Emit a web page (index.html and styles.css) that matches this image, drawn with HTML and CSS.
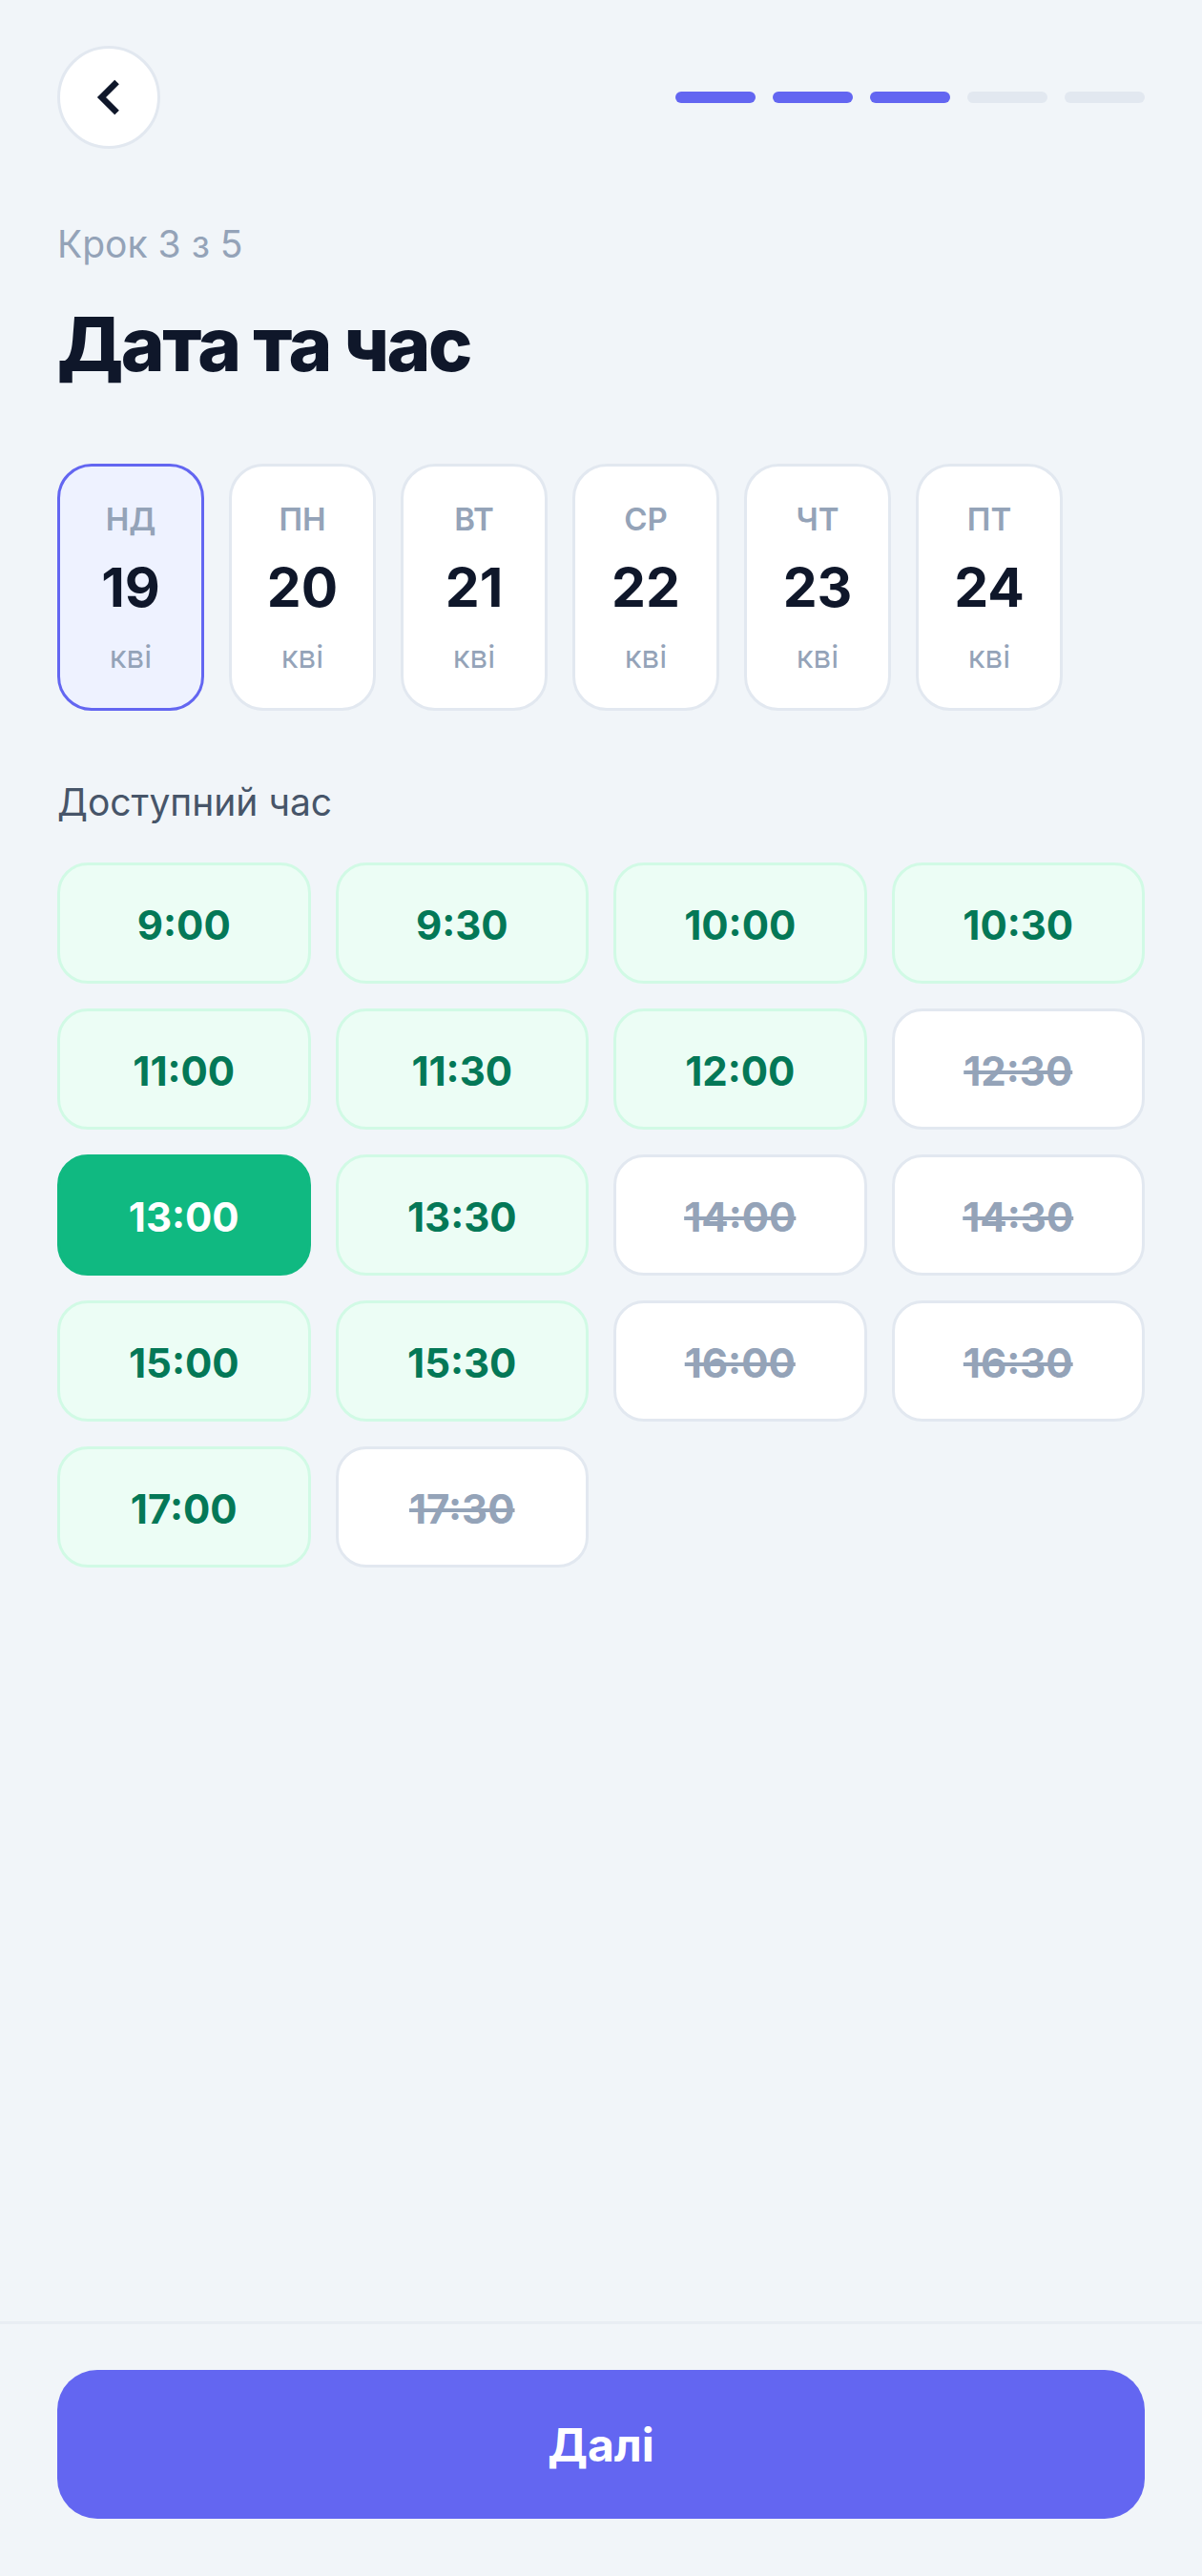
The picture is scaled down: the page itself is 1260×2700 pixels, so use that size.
FILE: index.html
```html
<!DOCTYPE html>
<html lang="uk">
<head>
    <meta charset="utf-8">
    <title>Дата та час</title>
    <link rel="stylesheet" href="styles.css">
</head>
<body>
    <div class="app">
        <main class="content">
            <header class="topbar">
                <button class="back-btn" aria-label="Назад">
                    <svg width="60" height="60" viewBox="0 0 24 24" fill="none" stroke="currentColor" stroke-width="2.6" stroke-linecap="square" stroke-linejoin="miter">
                        <path d="m14.5 17.5-5.5-5.5 5.5-5.5"/>
                    </svg>
                </button>
                <div class="progress">
                    <span class="bar done"></span>
                    <span class="bar done"></span>
                    <span class="bar done"></span>
                    <span class="bar"></span>
                    <span class="bar"></span>
                </div>
            </header>

            <p class="step">Крок 3 з 5</p>
            <h1 class="title">Дата та час</h1>

            <div class="days">
                <div class="day selected">
                    <span class="day-name">НД</span>
                    <span class="day-num">19</span>
                    <span class="day-month">кві</span>
                </div>
                <div class="day">
                    <span class="day-name">ПН</span>
                    <span class="day-num">20</span>
                    <span class="day-month">кві</span>
                </div>
                <div class="day">
                    <span class="day-name">ВТ</span>
                    <span class="day-num">21</span>
                    <span class="day-month">кві</span>
                </div>
                <div class="day">
                    <span class="day-name">СР</span>
                    <span class="day-num">22</span>
                    <span class="day-month">кві</span>
                </div>
                <div class="day">
                    <span class="day-name">ЧТ</span>
                    <span class="day-num">23</span>
                    <span class="day-month">кві</span>
                </div>
                <div class="day">
                    <span class="day-name">ПТ</span>
                    <span class="day-num">24</span>
                    <span class="day-month">кві</span>
                </div>
            </div>

            <h2 class="section-label">Доступний час</h2>

            <div class="slots">
                <div class="slot free">9:00</div>
                <div class="slot free">9:30</div>
                <div class="slot free">10:00</div>
                <div class="slot free">10:30</div>
                <div class="slot free">11:00</div>
                <div class="slot free">11:30</div>
                <div class="slot free">12:00</div>
                <div class="slot taken">12:30</div>
                <div class="slot active">13:00</div>
                <div class="slot free">13:30</div>
                <div class="slot taken">14:00</div>
                <div class="slot taken">14:30</div>
                <div class="slot free">15:00</div>
                <div class="slot free">15:30</div>
                <div class="slot taken">16:00</div>
                <div class="slot taken">16:30</div>
                <div class="slot free">17:00</div>
                <div class="slot taken">17:30</div>
            </div>
        </main>

        <footer class="footer">
            <button class="next-btn">Далі</button>
        </footer>
    </div>
</body>
</html>
```

FILE: styles.css
```css
* { box-sizing: border-box; }
body {
    margin: 0;
    background: #f1f5f9;
    font-family: Inter, "Noto Sans", sans-serif;
    color: #0f172a;
}
.app {
    min-height: 100vh;
    display: flex;
    flex-direction: column;
}
.content {
    flex: 1;
    padding: 48px 60px 0;
}

/* header */
.topbar {
    display: flex;
    align-items: center;
    justify-content: space-between;
}
.back-btn {
    width: 108px;
    height: 108px;
    border-radius: 50%;
    border: 3px solid #e2e8f0;
    background: #fff;
    color: #0f172a;
    display: flex;
    align-items: center;
    justify-content: center;
    padding: 0;
}
.progress { display: flex; gap: 18px; }
.bar {
    width: 84px;
    height: 12px;
    border-radius: 6px;
    background: #e2e8f0;
}
.bar.done { background: #6366f1; }

.step {
    margin: 75px 0 0;
    font-size: 39px;
    line-height: 50px;
    color: #94a3b8;
}
.title {
    margin: 32px 0 0;
    font-size: 78px;
    line-height: 96px;
    font-weight: 800;
    letter-spacing: -2.5px;
}

/* days */
.days {
    display: flex;
    gap: 26px;
    margin-top: 77px;
}
.day {
    width: 154px;
    height: 259px;
    border: 3px solid #e2e8f0;
    border-radius: 36px;
    background: #fff;
    display: flex;
    flex-direction: column;
    align-items: center;
    justify-content: center;
    gap: 22px;
}
.day.selected {
    border-color: #6366f1;
    background: #eef2ff;
}
.day-name {
    font-size: 33px;
    line-height: 40px;
    font-weight: 600;
    color: #94a3b8;
}
.day-num {
    font-size: 57px;
    line-height: 60px;
    font-weight: 700;
}
.day-month {
    font-size: 33px;
    line-height: 40px;
    color: #94a3b8;
}

/* slots */
.section-label {
    margin: 73px 0 0;
    font-size: 39px;
    line-height: 46px;
    font-weight: 400;
    color: #475569;
}
.slots {
    display: grid;
    grid-template-columns: repeat(4, 1fr);
    gap: 26px;
    margin-top: 40px;
}
.slot {
    height: 127px;
    padding-top: 4px;
    border: 3px solid #e2e8f0;
    border-radius: 32px;
    display: flex;
    align-items: center;
    justify-content: center;
    font-size: 42px;
    font-weight: 700;
}
.slot.free {
    background: #ecfdf5;
    border-color: #d1fae5;
    color: #047857;
}
.slot.active {
    background: #10b981;
    border-color: #10b981;
    color: #fff;
}
.slot.taken {
    background: #fff;
    color: #94a3b8;
    text-decoration: line-through;
}

/* footer */
.footer {
    border-top: 3px solid #e8edf3;
    padding: 48px 60px 60px;
}
.next-btn {
    width: 100%;
    height: 156px;
    border: 0;
    border-radius: 42px;
    background: #6366f1;
    color: #fff;
    font-family: inherit;
    font-size: 48px;
    font-weight: 700;
}
```
